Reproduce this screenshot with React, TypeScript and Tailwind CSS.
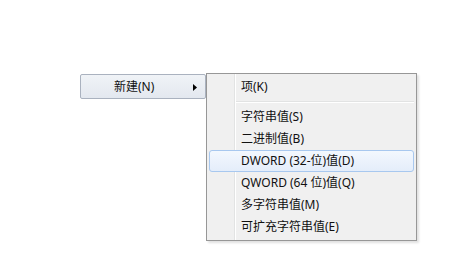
import React from 'react'

const font = '"Noto Sans", "Noto Sans CJK SC", sans-serif'

const groups: { label: string; active?: boolean }[][] = [
  [{ label: '项(K)' }],
  [
    { label: '字符串值(S)' },
    { label: '二进制值(B)' },
    { label: 'DWORD (32-位)值(D)', active: true },
    { label: 'QWORD (64 位)值(Q)' },
    { label: '多字符串值(M)' },
    { label: '可扩充字符串值(E)' },
  ],
]

function MenuItem({ label, active }: { label: string; active?: boolean }) {
  return (
    <div
      className={
        active
          ? 'flex h-[22px] items-center rounded-[3px] border border-[#a8c8ef] bg-[linear-gradient(to_bottom,#f3f8fe,#e4edfa)] pl-[31px] text-[12px] text-[#111]'
          : 'flex h-[22px] items-center border border-transparent pl-[31px] text-[12px] text-[#111]'
      }
    >
      {label}
    </div>
  )
}

export default function App() {
  return (
    <div
      className="flex h-[272px] w-[464px] items-start bg-white pl-[80px] pt-[73px]"
      style={{ fontFamily: font }}
    >
      {/* parent item, open */}
      <div className="mt-[1px] flex h-[25px] w-[126px] items-center rounded-[2px] border border-[#aab2bf] bg-[linear-gradient(to_bottom,#f0f3f7,#e3e8ef)] pl-[33px] pr-[8px] text-[12px] text-[#111]">
        <span className="flex-1">新建(N)</span>
        <svg width="4" height="7" viewBox="0 0 4 7" className="mt-[1px]">
          <path d="M0 0 L4 3.5 L0 7 Z" fill="#000" />
        </svg>
      </div>

      {/* submenu */}
      <div className="h-[168px] w-[211px] border border-[#979797] bg-[linear-gradient(to_right,#f0f0f0_27px,#e2e3e3_27px,#e2e3e3_28px,#ffffff_28px,#ffffff_29px,#f0f0f0_29px)] p-[2px] shadow-[2px_2px_2px_rgba(0,0,0,0.12)]">
        {groups.map((g, i) => (
          <div key={i}>
            {i > 0 && (
              <div className="flex h-[8px] flex-col justify-center pl-[27px]">
                <div className="h-[1px] bg-[#e2e3e3]" />
                <div className="h-[1px] bg-white" />
              </div>
            )}
            {g.map((it) => (
              <MenuItem key={it.label} label={it.label} active={it.active} />
            ))}
          </div>
        ))}
      </div>
    </div>
  )
}
